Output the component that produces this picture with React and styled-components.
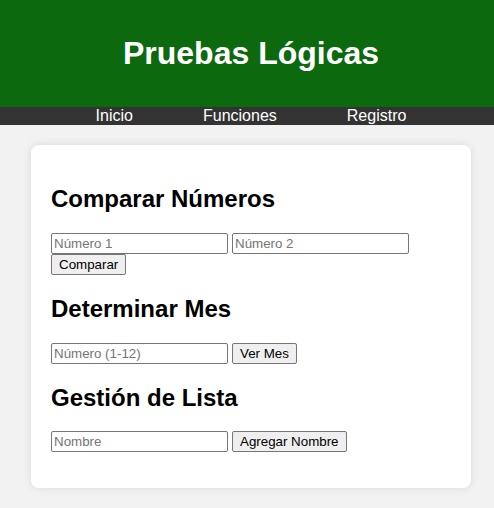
import styled, { createGlobalStyle } from "styled-components";

const GlobalStyle = createGlobalStyle`
  html, body {
    margin: 0;
    overflow-x: hidden;
    background: #f2f2f2;
    font-family: "Liberation Sans", Arial, sans-serif;
  }
`;

const Page = styled.div`
  width: 502px;
`;

const Header = styled.header`
  background: #0c690e;
  color: white;
  text-align: center;
  padding: 35px 0;
  h1 {
    margin: 0;
    font-size: 32px;
  }
`;

const Nav = styled.nav`
  background: #333;
  display: flex;
  justify-content: center;
  a {
    color: white;
    text-decoration: none;
    font-size: 16px;
    padding: 0 35px;
  }
`;

const Card = styled.main`
  width: 400px;
  margin: 20px auto;
  padding: 20px;
  background: white;
  border-radius: 8px;
  box-shadow: 0 0 10px rgba(0, 0, 0, 0.1);
  h2 {
    font-size: 24px;
    margin: 19.92px 0;
  }
`;

const Row = styled.div`
  display: flex;
  flex-wrap: wrap;
  column-gap: 4px;
`;

const Input = styled.input`
  box-sizing: border-box;
  width: 177px;
  height: 21px;
  padding: 1px 2px;
  border: 1px solid #767676;
  border-radius: 2px;
  font: 13.33px "Liberation Sans", Arial, sans-serif;
  &::placeholder {
    color: #757575;
  }
`;

const Button = styled.button`
  box-sizing: border-box;
  height: 21px;
  padding: 1px 7px;
  background: #efefef;
  border: 1px solid #767676;
  border-radius: 2px;
  color: black;
  font: 13.33px "Liberation Sans", Arial, sans-serif;
`;

const NameList = styled.ul`
  margin: 16px 0;
  padding-left: 40px;
`;

export default function App() {
  return (
    <Page>
      <GlobalStyle />
      <Header>
        <h1>Pruebas Lógicas</h1>
      </Header>
      <Nav>
        <a href="#">Inicio</a>
        <a href="#">Funciones</a>
        <a href="#">Registro</a>
      </Nav>
      <Card>
        <h2>Comparar Números</h2>
        <Row>
          <Input placeholder="Número 1" />
          <Input placeholder="Número 2" />
          <Button>Comparar</Button>
        </Row>
        <h2>Determinar Mes</h2>
        <Row>
          <Input placeholder="Número (1-12)" />
          <Button>Ver Mes</Button>
        </Row>
        <h2>Gestión de Lista</h2>
        <Row>
          <Input placeholder="Nombre" />
          <Button>Agregar Nombre</Button>
        </Row>
        <NameList />
      </Card>
    </Page>
  );
}
